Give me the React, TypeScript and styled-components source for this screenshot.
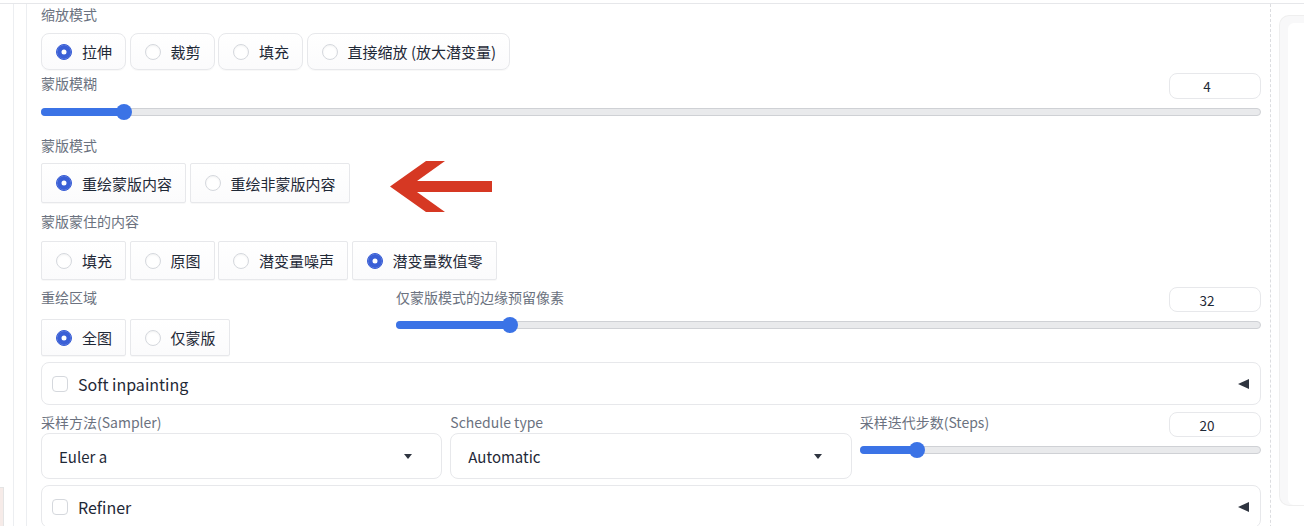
import styled, { createGlobalStyle } from "styled-components";

const GlobalStyle = createGlobalStyle`
  html, body {
    margin: 0;
    padding: 0;
    background: #ffffff;
    overflow: hidden;
  }
  body {
    font-family: "Noto Sans CJK SC", "Noto Sans", sans-serif;
    color: #1f2937;
  }
  * {
    box-sizing: border-box;
  }
`;

const Shell = styled.div`
  padding-top: 3px;
  height: 526px;
  overflow: hidden;
`;

const Frame = styled.div`
  display: flex;
  align-items: stretch;
  border-top: 1px solid #e6e7ea;
  height: 600px;
`;

const LeftRail = styled.div`
  width: 14px;
  flex: none;
  border-right: 1px solid #eceef1;
  display: flex;
  flex-direction: column;
`;

const RailStub = styled.div`
  margin-top: 483px;
  width: 4px;
  height: 40px;
  border: 1px solid #e4e4e4;
  border-left: none;
  background: #f6ebe8;
`;

const Main = styled.main`
  width: 1245px;
  flex: none;
  margin-left: 12px;
  border-left: 1px solid #eceef1;
  border-right: 1px dashed #dcdde0;
  padding: 0 9px 0 14px;
`;

const Side = styled.aside`
  flex: 1;
  min-width: 0;
  margin: 11px 0 0 8px;
  height: 491px;
  border: 1px solid #efefef;
  border-right: none;
  border-radius: 10px 0 0 10px;
  background: #f8f8f9;
  padding: 7px 0 0 8px;
`;

const SideInner = styled.div`
  height: 100%;
  background: #ffffff;
  border-radius: 6px 0 0 6px;
`;

const Block = styled.section<{ $mt: number }>`
  position: relative;
  margin-top: ${(p) => p.$mt}px;
`;

const Label = styled.div`
  font-size: 14px;
  line-height: 20px;
  color: #6b7280;
  white-space: nowrap;
`;

const RadioGroup = styled.div<{ $mt: number }>`
  display: flex;
  gap: 3.5px;
  margin-top: ${(p) => p.$mt}px;
`;

const RadioItem = styled.label<{ $h: number; $radius: number }>`
  display: flex;
  align-items: center;
  gap: 10px;
  height: ${(p) => p.$h}px;
  padding: 0 13px 0 14px;
  border: 1px solid #e7e8eb;
  border-radius: ${(p) => p.$radius}px;
  background: linear-gradient(#ffffff, #fbfbfc);
  box-shadow: 0 1px 1px rgba(0, 0, 0, 0.03);
  font-size: 15px;
  color: #1f2937;
  white-space: nowrap;
`;

const Dot = styled.span<{ $checked: boolean }>`
  width: 16px;
  height: 16px;
  flex: none;
  border-radius: 50%;
  border: 1px solid ${(p) => (p.$checked ? "#3a5fd6" : "#d5d8dd")};
  background: ${(p) => (p.$checked ? "#3a5fd6" : "#ffffff")};
  box-shadow: ${(p) => (p.$checked ? "inset 0 0 0 4.5px #3a5fd6, inset 0 0 0 10px #fff" : "inset 0 1px 2px rgba(0,0,0,0.05)")};
`;

const SliderHead = styled.div<{ $h: number }>`
  display: flex;
  justify-content: space-between;
  align-items: flex-start;
  height: ${(p) => p.$h}px;
`;

const NumberBox = styled.div<{ $h: number }>`
  width: 92px;
  height: ${(p) => p.$h}px;
  padding-right: 16px;
  border: 1px solid #e7e8eb;
  border-radius: 8px;
  background: #fff;
  display: flex;
  align-items: center;
  justify-content: center;
  font-size: 13.5px;
  color: #1f2937;
`;

const SliderArea = styled.div`
  height: 26px;
  display: flex;
  align-items: center;
`;

const Track = styled.div`
  position: relative;
  flex: 1;
  height: 8px;
  border: 1px solid #cfd1d5;
  border-radius: 4px;
  background: #e9eaec;
`;

const Fill = styled.div`
  position: absolute;
  left: -1px;
  top: -1px;
  height: 8px;
  border-radius: 4px;
  background: #3b73e6;
`;

const Thumb = styled.div`
  position: absolute;
  top: 50%;
  width: 16px;
  height: 16px;
  margin-top: -8px;
  margin-left: -1px;
  border-radius: 50%;
  background: #3b73e6;
`;

const Row = styled.div<{ $cols: string; $mt: number }>`
  display: grid;
  grid-template-columns: ${(p) => p.$cols};
  column-gap: 8px;
  margin-top: ${(p) => p.$mt}px;
`;

const Accordion = styled.div<{ $mt: number }>`
  display: flex;
  align-items: center;
  height: 43px;
  margin-top: ${(p) => p.$mt}px;
  padding: 0 11px 0 10px;
  border: 1px solid #e7e8eb;
  border-radius: 8px;
  background: #fff;
`;

const Checkbox = styled.span`
  width: 16px;
  height: 16px;
  border: 1px solid #d5d8dd;
  border-radius: 4px;
  background: #fff;
  flex: none;
`;

const AccTitle = styled.span`
  margin-left: 10px;
  font-size: 16px;
  color: #1f2937;
  flex: 1;
`;

const LeftCaret = styled.span`
  width: 0;
  height: 0;
  border-top: 5.5px solid transparent;
  border-bottom: 5.5px solid transparent;
  border-right: 11px solid #2f3540;
`;

const Dropdown = styled.div`
  display: flex;
  align-items: center;
  justify-content: space-between;
  height: 46px;
  margin-top: 1px;
  padding: 0 29px 0 17px;
  border: 1px solid #e7e8eb;
  border-radius: 8px;
  background: #fff;
  font-size: 15px;
  color: #1f2937;
`;

const DownCaret = styled.span`
  width: 0;
  height: 0;
  border-left: 4.5px solid transparent;
  border-right: 4.5px solid transparent;
  border-top: 5px solid #2f3540;
`;

const Arrow = styled.svg`
  position: absolute;
  left: 349px;
  top: 26px;
`;

type Opt = { text: string; checked?: boolean };

function Radios({ options, h, radius, mt }: { options: Opt[]; h: number; radius: number; mt: number }) {
  return (
    <RadioGroup $mt={mt}>
      {options.map((o) => (
        <RadioItem key={o.text} $h={h} $radius={radius}>
          <Dot $checked={!!o.checked} />
          {o.text}
        </RadioItem>
      ))}
    </RadioGroup>
  );
}

function Slider({ label, value, min, max, headH, boxH }: { label: string; value: number; min: number; max: number; headH: number; boxH: number }) {
  const pct = (value - min) / (max - min);
  return (
    <div>
      <SliderHead $h={headH}>
        <Label>{label}</Label>
        <NumberBox $h={boxH}>{value}</NumberBox>
      </SliderHead>
      <SliderArea>
        <Track>
          <Fill style={{ width: `calc((100% - 16px) * ${pct} + 9px)` }} />
          <Thumb style={{ left: `calc((100% - 16px) * ${pct})` }} />
        </Track>
      </SliderArea>
    </div>
  );
}

export default function App() {
  return (
    <>
      <GlobalStyle />
      <Shell>
        <Frame>
          <LeftRail>
            <RailStub />
          </LeftRail>
          <Main>
            <Block $mt={0}>
              <Label>缩放模式</Label>
              <Radios
                mt={9}
                h={37}
                radius={8}
                options={[
                  { text: "拉伸", checked: true },
                  { text: "裁剪" },
                  { text: "填充" },
                  { text: "直接缩放 (放大潜变量)" },
                ]}
              />
            </Block>
            <Block $mt={3}>
              <Slider label="蒙版模糊" value={4} min={0} max={64} headH={26} boxH={26} />
            </Block>
            <Block $mt={10}>
              <Label>蒙版模式</Label>
              <Radios
                mt={8}
                h={40}
                radius={2}
                options={[{ text: "重绘蒙版内容", checked: true }, { text: "重绘非蒙版内容" }]}
              />
              <Arrow width="102" height="51" viewBox="0 0 102 51">
                <polygon
                  points="0,25.5 36,0 55,0 27,20 102,20 102,31 27,31 55,51 36,51"
                  fill="#d63823"
                />
              </Arrow>
            </Block>
            <Block $mt={8}>
              <Label>蒙版蒙住的内容</Label>
              <Radios
                mt={10}
                h={39}
                radius={2}
                options={[
                  { text: "填充" },
                  { text: "原图" },
                  { text: "潜变量噪声" },
                  { text: "潜变量数值零", checked: true },
                ]}
              />
            </Block>
            <Row $cols="347px 1fr" $mt={7}>
              <div>
                <Label>重绘区域</Label>
                <Radios mt={12} h={37} radius={2} options={[{ text: "全图", checked: true }, { text: "仅蒙版" }]} />
              </div>
              <Slider label="仅蒙版模式的边缘预留像素" value={32} min={0} max={256} headH={25} boxH={25} />
            </Row>
            <Accordion $mt={6}>
              <Checkbox />
              <AccTitle>Soft inpainting</AccTitle>
              <LeftCaret />
            </Accordion>
            <Row $cols="1fr 1fr 1fr" $mt={7}>
              <div>
                <Label>采样方法(Sampler)</Label>
                <Dropdown>
                  Euler a
                  <DownCaret />
                </Dropdown>
              </div>
              <div>
                <Label>Schedule type</Label>
                <Dropdown>
                  Automatic
                  <DownCaret />
                </Dropdown>
              </div>
              <Slider label="采样迭代步数(Steps)" value={20} min={1} max={150} headH={25} boxH={25} />
            </Row>
            <Accordion $mt={6}>
              <Checkbox />
              <AccTitle>Refiner</AccTitle>
              <LeftCaret />
            </Accordion>
          </Main>
          <Side>
            <SideInner />
          </Side>
        </Frame>
      </Shell>
    </>
  );
}
